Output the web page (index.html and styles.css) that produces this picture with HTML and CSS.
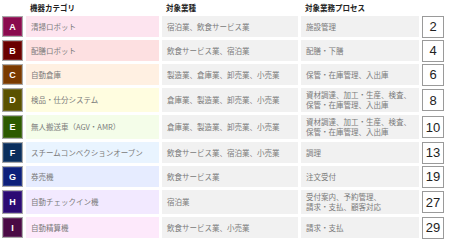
FILE: index.html
```html
<!DOCTYPE html>
<html lang="ja">
<head>
<meta charset="utf-8">
<link rel="stylesheet" href="styles.css">
</head>
<body>
<div class="table">
  <div class="hd"></div>
  <div class="hd">機器カテゴリ</div>
  <div class="hd">対象業種</div>
  <div class="hd">対象業務プロセス</div>
  <div class="hd"></div>

  <div class="badge a">A</div><div class="cat a">清掃ロボット</div><div class="cell">宿泊業、飲食サービス業</div><div class="cell">施設管理</div><div class="num">2</div>
  <div class="badge b">B</div><div class="cat b">配膳ロボット</div><div class="cell">飲食サービス業、宿泊業</div><div class="cell">配膳・下膳</div><div class="num">4</div>
  <div class="badge c">C</div><div class="cat c">自動倉庫</div><div class="cell">製造業、倉庫業、卸売業、小売業</div><div class="cell">保管・在庫管理、入出庫</div><div class="num">6</div>
  <div class="badge d">D</div><div class="cat d">検品・仕分システム</div><div class="cell">倉庫業、製造業、卸売業、小売業</div><div class="cell two">資材調達、加工・生産、検査、<br>保管・在庫管理、入出庫</div><div class="num">8</div>
  <div class="badge e">E</div><div class="cat e">無人搬送車（AGV・AMR）</div><div class="cell">倉庫業、製造業、卸売業、小売業</div><div class="cell two">資材調達、加工・生産、検査、<br>保管・在庫管理、入出庫</div><div class="num">10</div>
  <div class="badge f">F</div><div class="cat f">スチームコンベクションオーブン</div><div class="cell">飲食サービス業、宿泊業、小売業</div><div class="cell">調理</div><div class="num">13</div>
  <div class="badge g">G</div><div class="cat g">券売機</div><div class="cell">飲食サービス業</div><div class="cell">注文受付</div><div class="num">19</div>
  <div class="badge h">H</div><div class="cat h">自動チェックイン機</div><div class="cell">宿泊業</div><div class="cell two">受付案内、予約管理、<br>請求・支払、顧客対応</div><div class="num">27</div>
  <div class="badge i">I</div><div class="cat i">自動精算機</div><div class="cell">飲食サービス業、小売業</div><div class="cell">請求・支払</div><div class="num">29</div>
</div>
</body>
</html>
```
FILE: styles.css
```css
html, body {
  margin: 0;
  padding: 0;
  background: #ffffff;
}
body {
  font-family: "Noto Sans CJK JP", "Noto Sans", sans-serif;
  width: 451px;
  height: 243px;
  overflow: hidden;
}
.table {
  display: grid;
  grid-template-columns: 21px 133px 136px 118px 22px;
  grid-template-rows: 11px 21px 21px 21px 24px 24px 21px 21px 24px 21px;
  column-gap: 3px;
  row-gap: 3px;
  padding: 2px 0 0 2px;
}
.hd {
  font-size: 7.5px;
  font-weight: bold;
  color: #222;
  line-height: 11px;
  padding-left: 4px;
  white-space: nowrap;
  margin-bottom: -2px;
}
.badge {
  display: flex;
  align-items: center;
  justify-content: center;
  color: #fff;
  font-family: "Liberation Sans", Arial, sans-serif;
  font-weight: bold;
  font-size: 9px;
  box-sizing: border-box;
  border: 1px solid #a9a9a9;
  box-shadow: inset 0 0 0 1px rgba(255,255,255,0.15);
}
.cat, .cell {
  display: flex;
  align-items: center;
  padding-left: 5px;
  font-size: 7.5px;
  line-height: 10px;
  color: #7a7a7a;
  white-space: nowrap;
}
.cell.two {
  line-height: 10px;
}
.cell { background: #f1f1f1; }
.num {
  align-self: center;
  height: 22px;
  box-sizing: border-box;
  border: 1px solid #9a9a9a;
  background: #fff;
  display: flex;
  align-items: center;
  justify-content: center;
  font-family: "Liberation Sans", Arial, sans-serif;
  font-size: 13px;
  color: #222;
}
.badge.a { background: #8a0a4e; }
.badge.b { background: #6a0000; }
.badge.c { background: #7a3a00; }
.badge.d { background: #5a5200; }
.badge.e { background: #2d5a00; }
.badge.f { background: #0a2e5c; }
.badge.g { background: #0c1f7a; }
.badge.h { background: #2b0a73; }
.badge.i { background: #4a0a45; }
.cat.a { background: #fde4ef; }
.cat.b { background: #fde0e1; }
.cat.c { background: #fff0e2; }
.cat.d { background: #fffde0; }
.cat.e { background: #f4fde9; }
.cat.f { background: #e9f4ff; }
.cat.g { background: #e6ecff; }
.cat.h { background: #f2e9ff; }
.cat.i { background: #fde9fb; }
```
